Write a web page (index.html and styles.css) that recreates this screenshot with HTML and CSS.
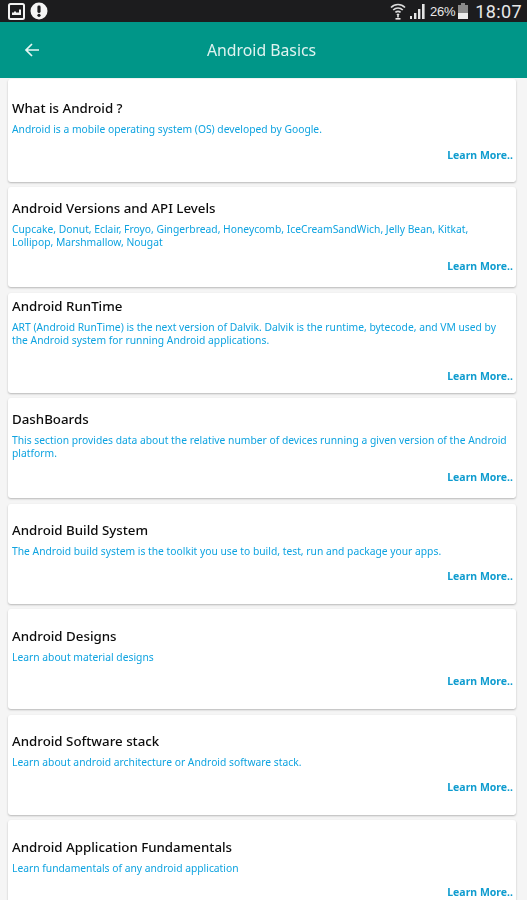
FILE: index.html
```html
<!DOCTYPE html>
<html lang="en">
<head>
    <meta charset="UTF-8">
    <meta name="viewport" content="width=device-width, initial-scale=1.0">
    <title>Android Basics</title>
    <link rel="stylesheet" href="styles.css">
</head>
<body>
    <div id="status-bar">
        <div class="status-left">
            <svg class="icon-picture" width="17" height="17" viewBox="0 0 17 17">
                <rect x="1" y="1" width="15" height="15" rx="1.5" fill="none" stroke="#f2f2f2" stroke-width="2"/>
                <path d="M4 12h9V6.5h-2v3H8v-1H6v1H4z" fill="#f2f2f2"/>
            </svg>
            <svg class="icon-alert" width="18" height="18" viewBox="0 0 18 18">
                <circle cx="9" cy="9" r="8.5" fill="#f4f4f4"/>
                <rect x="7.4" y="3.5" width="3.2" height="7.5" rx="1.4" fill="#1c1c1e"/>
                <circle cx="9" cy="13.3" r="1.6" fill="#1c1c1e"/>
            </svg>
        </div>
        <div class="status-right">
            <svg class="icon-wifi" width="16" height="18" viewBox="0 0 16 18">
                <path d="M1 5.5C5 1.5 11 1.5 15 5.5M3.2 8C6 5.4 10 5.4 12.8 8M5.4 10.4C7 9 9 9 10.6 10.4" fill="none" stroke="#dcdcdc" stroke-width="1.7"/>
                <path d="M8 11.2 9.8 13H8.8V15.5H7.2V13H6.2z" fill="#e8e8e8"/>
                <rect x="5.5" y="16" width="5" height="1.6" fill="#e8e8e8"/>
            </svg>
            <svg class="icon-signal" width="15" height="16" viewBox="0 0 15 16">
                <rect x="0" y="13" width="2" height="3" fill="#e4e4e4"/>
                <rect x="4" y="10" width="2.4" height="6" fill="#e4e4e4"/>
                <rect x="8" y="6" width="2.4" height="10" fill="#e4e4e4"/>
                <rect x="12" y="1" width="2.6" height="15" fill="#e4e4e4"/>
            </svg>
            <span class="battery-text">26%</span>
            <svg class="icon-battery" width="10" height="16" viewBox="0 0 10 16">
                <rect x="3" y="0" width="4" height="2" fill="#8a8a8a"/>
                <rect x="0" y="2" width="10" height="14" fill="#8a8a8a"/>
                <rect x="0" y="10" width="10" height="6" fill="#ececec"/>
            </svg>
            <span class="clock">18:07</span>
        </div>
    </div>

    <header id="app-bar">
        <svg class="back-arrow" width="16" height="16" viewBox="0 0 16 16">
            <path d="M15 8H2M8 2 2 8l6 6" fill="none" stroke="#e6f6f3" stroke-width="1.7"/>
        </svg>
        <h1>Android Basics</h1>
    </header>

    <main id="topic-list">
        <article class="card card-first">
            <h2>What is Android ?</h2>
            <p>Android is a mobile operating system (OS) developed by Google.</p>
            <a href="#">Learn More..</a>
        </article>
        <article class="card card-versions">
            <h2>Android Versions and API Levels</h2>
            <p>Cupcake, Donut, Eclair, Froyo, Gingerbread, Honeycomb, IceCreamSandWich, Jelly Bean, Kitkat, Lollipop, Marshmallow, Nougat</p>
            <a href="#">Learn More..</a>
        </article>
        <article class="card card-runtime">
            <h2>Android RunTime</h2>
            <p>ART (Android RunTime) is the next version of Dalvik. Dalvik is the runtime, bytecode, and VM used by the Android system for running Android applications.</p>
            <a href="#">Learn More..</a>
        </article>
        <article class="card card-versions">
            <h2>DashBoards</h2>
            <p>This section provides data about the relative number of devices running a given version of the Android platform.</p>
            <a href="#">Learn More..</a>
        </article>
        <article class="card">
            <h2>Android Build System</h2>
            <p>The Android build system is the toolkit you use to build, test, run and package your apps.</p>
            <a href="#">Learn More..</a>
        </article>
        <article class="card">
            <h2>Android Designs</h2>
            <p>Learn about material designs</p>
            <a href="#">Learn More..</a>
        </article>
        <article class="card">
            <h2>Android Software stack</h2>
            <p>Learn about android architecture or Android software stack.</p>
            <a href="#">Learn More..</a>
        </article>
        <article class="card">
            <h2>Android Application Fundamentals</h2>
            <p>Learn fundamentals of any android application</p>
            <a href="#">Learn More..</a>
        </article>
    </main>
</body>
</html>
```

FILE: styles.css
```css
/* Page */
html, body {
    height: 100%;
    overflow: hidden;
}
body {
    margin: 0;
    background-color: #f5f5f5;
    font-family: "Noto Sans", "Open Sans", sans-serif;
    filter: blur(0.4px);
}

/* Status bar */
#status-bar {
    height: 22px;
    background-color: #1c1c1e;
    display: flex;
    justify-content: space-between;
    align-items: center;
    padding: 0 5px 0 8px;
}
.status-left {
    display: flex;
    align-items: center;
    gap: 5px;
}
.status-right {
    display: flex;
    align-items: center;
    color: #e8e8e8;
}
.icon-signal {
    margin-left: 4px;
}
.battery-text {
    margin-left: 5px;
    font-family: "Liberation Sans", sans-serif;
    font-size: 13px;
    letter-spacing: -0.3px;
}
.icon-battery {
    margin-left: 3px;
}
.clock {
    margin-left: 7px;
    font-family: "Roboto", sans-serif;
    font-size: 18px;
    letter-spacing: 0.4px;
}

/* App bar */
#app-bar {
    height: 56px;
    background-color: #009688;
    display: flex;
    align-items: center;
    padding-left: 24px;
}
.back-arrow {
    flex-shrink: 0;
}
#app-bar h1 {
    margin: 0 0 0 167px;
    color: #dff3f0;
    font-size: 15.8px;
    font-weight: normal;
}

/* Cards */
#topic-list {
    display: flex;
    flex-direction: column;
    gap: 5.5px;
    padding: 1px 11px 0 8px;
}
.card {
    flex-shrink: 0;
    box-sizing: border-box;
    height: 100px;
    padding: 17.5px 6px 0 4px;
    background-color: white;
    border-radius: 3px;
    box-shadow: 0 1px 2px rgba(0, 0, 0, 0.25);
    display: flex;
    flex-direction: column;
}
.card h2 {
    margin: 0;
    color: #0c0c0c;
    font-size: 13.3px;
    line-height: 18px;
    font-weight: 500;
}
.card p {
    margin: 6px 0 0;
    color: #0fa3e0;
    font-size: 10.3px;
    line-height: 13px;
}
.card a {
    align-self: flex-end;
    margin-top: 10.5px;
    margin-right: -3px;
    color: #0f9ccf;
    font-size: 10.5px;
    line-height: 14px;
    font-weight: bold;
    text-decoration: none;
}
.card-first {
    height: 102.5px;
    padding-top: 20px;
}
.card-first a {
    margin-top: 12px;
}
.card-versions {
    padding-top: 12px;
}
.card-versions a {
    margin-top: 10px;
}
.card-runtime {
    padding-top: 4.5px;
}
.card-runtime a {
    margin-top: 22px;
}
```
